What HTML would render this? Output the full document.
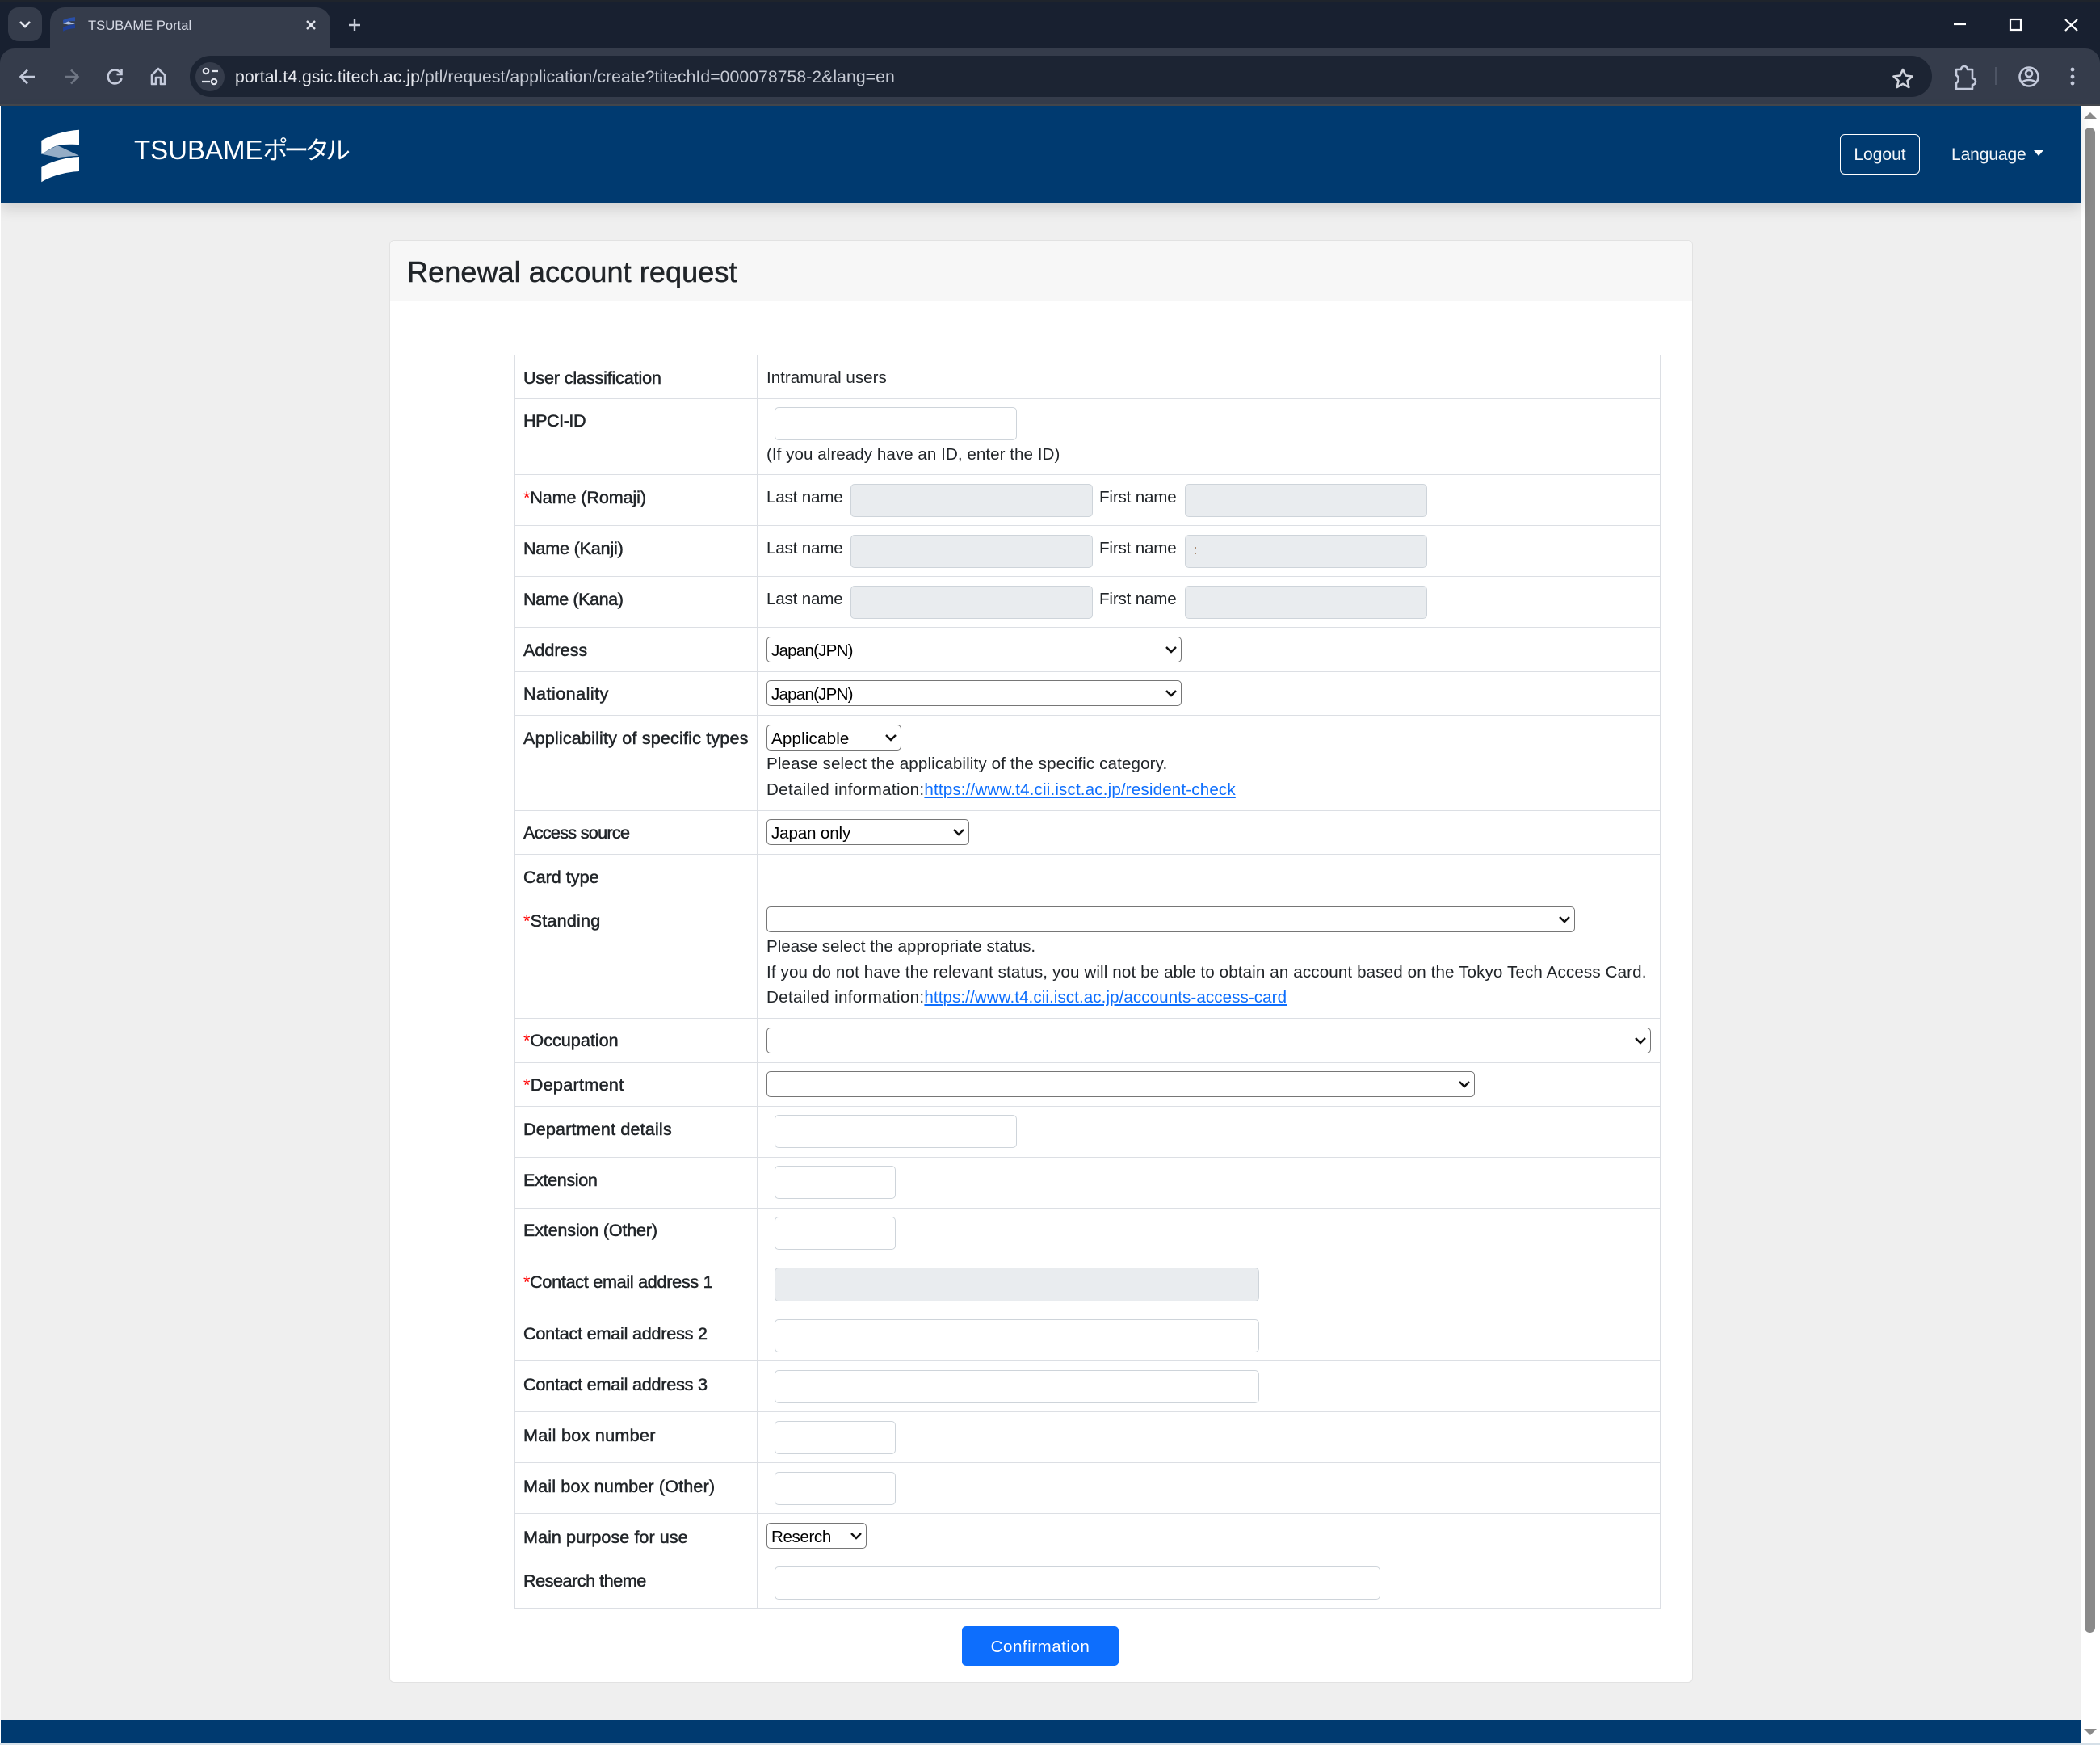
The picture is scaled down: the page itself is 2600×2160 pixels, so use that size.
<!DOCTYPE html>
<html lang="en"><head><meta charset="utf-8"><title>TSUBAME Portal</title>
<style>
*{box-sizing:border-box}
html,body{margin:0;padding:0;width:2600px;height:2160px;overflow:hidden;background:#efefef;font-family:"Liberation Sans","Noto Sans CJK JP",sans-serif;color:#212529}
.a,.l,.v,.h,.vl,input,select{position:absolute}
.l{left:648px;margin-top:1px;font-size:21.6px;line-height:28px;white-space:nowrap;-webkit-text-stroke:.5px #212529}
.l b{color:#f00;font-weight:400;-webkit-text-stroke:0}
.v{font-size:20.6px;margin-top:1px;line-height:28px;white-space:nowrap;left:949px}
.h{left:637px;width:1419px;height:1px;background:#dcdfe4}
.vl{top:439px;width:1px;height:1552px;background:#dcdfe4}
input{border:1px solid #ced4da;border-radius:5px;background:#fff;padding:0;height:41px;left:959px;outline:0}
input.d{background:#e9ecef}
select{left:949px;height:32px;font:20.6px "Liberation Sans",sans-serif;color:#000;background:#fff;border:1px solid #767676;border-radius:5px;padding:2px 0 0 5px;-webkit-appearance:none;appearance:none}
a{color:#0d6efd;text-decoration:underline}
svg{position:absolute;overflow:visible}
.c{fill:none;stroke:#111;stroke-width:2.4}
</style></head><body>

<!-- browser chrome -->
<div class="a" style="left:0;top:0;width:2600px;height:130px;background:#182030"></div>
<div class="a" style="left:0;top:0;width:2600px;height:2px;background:#1f242c"></div>
<div class="a" style="left:10px;top:9px;width:42px;height:42px;border-radius:13px;background:#353c4b"></div>
<svg style="left:0;top:0" width="60" height="60"><path d="M25 27l6 6 6-6" fill="none" stroke="#e3e6ee" stroke-width="2.6"/></svg>
<div class="a" style="left:62px;top:9px;width:347px;height:52px;background:#353c4b;border-radius:18px 18px 0 0"></div>
<div class="a" style="left:0;top:60px;width:2600px;height:70px;background:#353c4b;border-radius:18px 18px 0 0"></div>
<div class="a" style="left:0;top:129px;width:2600px;height:2px;background:#44474d"></div>
<svg style="left:78px;top:21px" width="15" height="18" viewBox="51 160 47 66" preserveAspectRatio="none">
<path d="M98 160.7C80 162 63 167 51.3 174V190.7C60 186 65 182 71.3 180C80 178.5 90 178.5 98 179.3Z" fill="#2a4fa8"/>
<path d="M71.3 180L98 192.7C88 193 80 194 73 195L51.3 190.7Z" fill="#a9bce0"/>
<path d="M98 194C80 195 63 200 51.3 207V225.3C63 218 80 213 98 212Z" fill="#1f3f97"/>
</svg>
<div class="a" style="left:109px;top:20px;font-size:16.6px;line-height:24px;color:#d5d9e4;white-space:nowrap">TSUBAME Portal</div>
<svg style="left:0;top:0" width="460" height="60"><path d="M380 26l10 10M390 26l-10 10" stroke="#e3e6ee" stroke-width="2.4"/><path d="M439 24v14M432 31h14" stroke="#c7ccd9" stroke-width="2.4"/></svg>
<svg style="left:0;top:60px" width="240" height="70" fill="none" stroke="#c4cadb" stroke-width="2.6">
<path d="M43 35H26M34 26.500l-8.500 8.500 8.500 8.500"/>
<path d="M96 35H80M88 26.500l8.500 8.500-8.500 8.500" stroke="#6f7684"/>
<path d="M149.500 30.500a8.500 8.500 0 1 0 1 6.500M150.500 26v6h-6"/>
<path d="M188 44V33l8-8 8 8v11h-5v-8h-6v8z" stroke-linejoin="round"/>
</svg>
<div class="a" style="left:235px;top:69px;width:2157px;height:51px;border-radius:26px;background:#1c2433"></div>
<div class="a" style="left:242px;top:77px;width:36px;height:36px;border-radius:50%;background:#353c4b"></div>
<svg style="left:242px;top:77px" width="36" height="36" fill="none" stroke="#e3e6ee" stroke-width="2.2"><circle cx="13" cy="11" r="3.2"/><circle cx="23" cy="24" r="3.2"/><path d="M20 11h8M8 24h10"/></svg>
<div class="a" style="left:291px;top:81.500px;font-size:21.2px;letter-spacing:.06px;line-height:28px;color:#e6e8ee;white-space:nowrap">portal.t4.gsic.titech.ac.jp<span style="color:#c5c9d3">/ptl/request/application/create?titechId=000078758-2&amp;lang=en</span></div>
<svg style="left:2300px;top:60px" width="300" height="70" fill="none" stroke="#c4cadb" stroke-width="2.6">
<path d="M56 26l3.500 7.500 8 1-6 5.500 1.800 8-7.300-4.200-7.300 4.200 1.800-8-6-5.500 8-1z" stroke="#d0d3dc" stroke-linejoin="round"/>
<path d="M122 26h6a4 4 0 0 1 8 0h6v11a4 4 0 0 1 0 8v5h-20v-7a6 6 0 0 0 0-10z" stroke-linejoin="round"/>
<path d="M171 23v22" stroke="#4d5464" stroke-width="2"/>
<circle cx="212" cy="35" r="11.500"/><circle cx="212" cy="31" r="4"/><path d="M203 42c5-4 13-4 18 0"/>
<g fill="#c4cadb" stroke="none"><circle cx="266" cy="26" r="2.400"/><circle cx="266" cy="35" r="2.400"/><circle cx="266" cy="43" r="2.400"/></g>
</svg>
<svg style="left:2400px;top:0" width="200" height="60" fill="none" stroke="#fff" stroke-width="2.2">
<path d="M19 30h15"/><rect x="89" y="24" width="13" height="13"/><path d="M157 24l15 14M172 24l-15 14"/>
</svg>

<!-- page -->
<div class="a" style="left:1px;top:131px;width:2575px;height:120px;background:#003a70;box-shadow:0 8px 16px rgba(0,0,0,.13);z-index:2"></div>
<div class="a" style="left:0;top:131px;width:1px;height:2027px;background:#fff;z-index:3"></div>
<svg style="left:0;top:131px;z-index:3" width="120" height="120" viewBox="0 131 120 120">
<path d="M98 160.700C80 162 63 167 51.300 174V190.700C60 186 65 182 71.300 180C80 178.500 90 178.500 98 179.300Z" fill="#fff"/>
<path d="M71.300 180L98 192.700C88 193 80 194 73 195L51.300 190.700Z" fill="#95adc6"/>
<path d="M98 194C80 195 63 200 51.300 207V225.300C63 218 80 213 98 212Z" fill="#fff"/>
</svg>
<div class="a" style="left:166px;top:163px;font-size:33px;line-height:46px;color:#fff;white-space:nowrap;z-index:3">TSUBAME<span style="font-size:31px;letter-spacing:-5.200px">ポータル</span></div>
<div class="a" style="left:2278px;top:166px;width:99px;height:50px;border:1.500px solid #fff;border-radius:6px;color:#f4f6f9;font-size:21px;line-height:49px;text-align:center;z-index:3">Logout</div>
<div class="a" style="left:2416px;top:178px;font-size:21px;letter-spacing:-.1px;line-height:28px;color:#f4f6f9;z-index:3">Language</div>
<svg style="left:2518px;top:186px;z-index:3" width="12" height="8"><path d="M0 0h12L6 7z" fill="#fff"/></svg>

<div class="a" style="left:482px;top:297px;width:1614px;height:1786px;background:#fff;border:1px solid #e2e2e2;border-radius:6px"></div>
<div class="a" style="left:483px;top:298px;width:1612px;height:75px;background:#f7f7f7;border-bottom:1px solid #dfdfdf;border-radius:6px 6px 0 0"></div>
<div class="a" style="left:504px;top:314px;font-size:36px;letter-spacing:.1px;line-height:46px;white-space:nowrap;-webkit-text-stroke:.5px #212529">Renewal account request</div>

<!-- table grid -->
<div class="h" style="top:439px"></div><div class="h" style="top:493px"></div><div class="h" style="top:587px"></div><div class="h" style="top:650px"></div><div class="h" style="top:713px"></div><div class="h" style="top:776px"></div><div class="h" style="top:831px"></div><div class="h" style="top:885px"></div><div class="h" style="top:1003px"></div><div class="h" style="top:1057px"></div><div class="h" style="top:1111px"></div><div class="h" style="top:1260px"></div><div class="h" style="top:1315px"></div><div class="h" style="top:1369px"></div><div class="h" style="top:1432px"></div><div class="h" style="top:1495px"></div><div class="h" style="top:1558px"></div><div class="h" style="top:1621px"></div><div class="h" style="top:1684px"></div><div class="h" style="top:1747px"></div><div class="h" style="top:1810px"></div><div class="h" style="top:1873px"></div><div class="h" style="top:1928px"></div><div class="h" style="top:1991px"></div>
<div class="vl" style="left:637px"></div><div class="vl" style="left:937px"></div><div class="vl" style="left:2055px"></div>

<!-- labels -->
<div class="l" style="top:453px;letter-spacing:-.17px">User classification</div>
<div class="l" style="top:506px;letter-spacing:-.47px">HPCI-ID</div>
<div class="l" style="top:601px;letter-spacing:-.12px"><b>*</b>Name (Romaji)</div>
<div class="l" style="top:664px;letter-spacing:-.2px">Name (Kanji)</div>
<div class="l" style="top:727px;letter-spacing:-.45px">Name (Kana)</div>
<div class="l" style="top:790px">Address</div>
<div class="l" style="top:844px;letter-spacing:.45px">Nationality</div>
<div class="l" style="top:899px;letter-spacing:.16px">Applicability of specific types</div>
<div class="l" style="top:1016px;letter-spacing:-.7px">Access source</div>
<div class="l" style="top:1071px">Card type</div>
<div class="l" style="top:1125px;letter-spacing:.2px"><b>*</b>Standing</div>
<div class="l" style="top:1273px"><b>*</b>Occupation</div>
<div class="l" style="top:1328px;letter-spacing:.3px"><b>*</b>Department</div>
<div class="l" style="top:1383px;letter-spacing:.14px">Department details</div>
<div class="l" style="top:1446px;letter-spacing:-.37px">Extension</div>
<div class="l" style="top:1508px;letter-spacing:-.2px">Extension (Other)</div>
<div class="l" style="top:1572px;letter-spacing:-.29px"><b>*</b>Contact email address 1</div>
<div class="l" style="top:1636px;letter-spacing:-.22px">Contact email address 2</div>
<div class="l" style="top:1699px;letter-spacing:-.22px">Contact email address 3</div>
<div class="l" style="top:1762px;letter-spacing:.27px">Mail box number</div>
<div class="l" style="top:1825px;letter-spacing:.14px">Mail box number (Other)</div>
<div class="l" style="top:1888px;letter-spacing:.04px">Main purpose for use</div>
<div class="l" style="top:1942px;letter-spacing:-.47px">Research theme</div>

<!-- values -->
<div class="v" style="top:453px">Intramural users</div>
<input style="top:504px;width:300px">
<div class="v" style="top:548px;letter-spacing:.04px">(If you already have an ID, enter the ID)</div>

<div class="v" style="top:601px;letter-spacing:-.18px">Last name</div><input class="d" style="top:599px;left:1053px;width:300px">
<div class="v" style="top:601px;left:1361px;letter-spacing:-.17px">First name</div><input class="d" style="top:599px;left:1467px;width:300px">
<div class="v" style="top:664px;letter-spacing:-.18px">Last name</div><input class="d" style="top:662px;left:1053px;width:300px">
<div class="v" style="top:664px;left:1361px;letter-spacing:-.17px">First name</div><input class="d" style="top:662px;left:1467px;width:300px">
<div class="v" style="top:727px;letter-spacing:-.18px">Last name</div><input class="d" style="top:725px;left:1053px;width:300px">
<div class="v" style="top:727px;left:1361px;letter-spacing:-.17px">First name</div><input class="d" style="top:725px;left:1467px;width:300px">
<div class="a" style="left:1479px;top:618px;width:1px;height:2px;background:#b5906e"></div><div class="a" style="left:1479px;top:629px;width:1px;height:1px;background:#b5906e"></div>
<div class="a" style="left:1480px;top:677px;width:1px;height:2px;background:#a98a70"></div><div class="a" style="left:1480px;top:684px;width:1px;height:2px;background:#a98a70"></div>

<select style="top:788px;width:514px;letter-spacing:-.8px"><option>Japan(JPN)</option></select>
<svg style="left:1443px;top:800px" width="14" height="8"><path class="c" d="M1 1l6 6 6-6"/></svg>
<select style="top:842px;width:514px;letter-spacing:-.8px"><option>Japan(JPN)</option></select>
<svg style="left:1443px;top:854px" width="14" height="8"><path class="c" d="M1 1l6 6 6-6"/></svg>
<select style="top:897px;width:167px;letter-spacing:.15px"><option>Applicable</option></select>
<svg style="left:1096px;top:909px" width="14" height="8"><path class="c" d="M1 1l6 6 6-6"/></svg>
<div class="v" style="top:931px;letter-spacing:.12px">Please select the applicability of the specific category.</div>
<div class="v" style="top:963px"><span style="letter-spacing:.31px">Detailed information:</span><a style="letter-spacing:.15px">https://www.t4.cii.isct.ac.jp/resident-check</a></div>
<select style="top:1014px;width:251px;letter-spacing:-.15px"><option>Japan only</option></select>
<svg style="left:1180px;top:1026px" width="14" height="8"><path class="c" d="M1 1l6 6 6-6"/></svg>
<select style="top:1122px;width:1001px"><option></option></select>
<svg style="left:1930px;top:1134px" width="14" height="8"><path class="c" d="M1 1l6 6 6-6"/></svg>
<div class="v" style="top:1157px">Please select the appropriate status.</div>
<div class="v" style="top:1189px;letter-spacing:.12px">If you do not have the relevant status, you will not be able to obtain an account based on the Tokyo Tech Access Card.</div>
<div class="v" style="top:1220px"><span style="letter-spacing:.31px">Detailed information:</span><a style="letter-spacing:.07px">https://www.t4.cii.isct.ac.jp/accounts-access-card</a></div>
<select style="top:1272px;width:1095px"><option></option></select>
<svg style="left:2024px;top:1284px" width="14" height="8"><path class="c" d="M1 1l6 6 6-6"/></svg>
<select style="top:1326px;width:877px"><option></option></select>
<svg style="left:1806px;top:1338px" width="14" height="8"><path class="c" d="M1 1l6 6 6-6"/></svg>
<input style="top:1380px;width:300px">
<input style="top:1443px;width:150px">
<input style="top:1506px;width:150px">
<input class="d" style="top:1569px;width:600px;height:42px">
<input style="top:1633px;width:600px">
<input style="top:1696px;width:600px">
<input style="top:1759px;width:150px">
<input style="top:1822px;width:150px">
<select style="top:1885px;width:124px;letter-spacing:-.4px"><option>Reserch</option></select>
<svg style="left:1053px;top:1897px" width="14" height="8"><path class="c" d="M1 1l6 6 6-6"/></svg>
<input style="top:1939px;width:750px">

<div class="a" style="left:1191px;top:2013px;width:194px;height:49px;background:#0d6efd;border-radius:5px;color:#fff;font-size:20.6px;letter-spacing:.5px;line-height:51px;text-align:center">Confirmation</div>

<div class="a" style="left:0;top:2129px;width:2576px;height:29px;background:#003a70"></div>
<div class="a" style="left:0;top:2158px;width:2600px;height:2px;background:#d6e0e8"></div>

<!-- scrollbar -->
<div class="a" style="left:2576px;top:131px;width:24px;height:2027px;background:#fff"></div>
<svg style="left:2576px;top:131px" width="24" height="2027"><path d="M4 16L12 8l8 8z" fill="#8a8a8a"/><rect x="5" y="27" width="13" height="1863" rx="6.500" fill="#8a8a8a"/><path d="M4 2009h16l-8 8z" fill="#8a8a8a"/></svg>
</body></html>
